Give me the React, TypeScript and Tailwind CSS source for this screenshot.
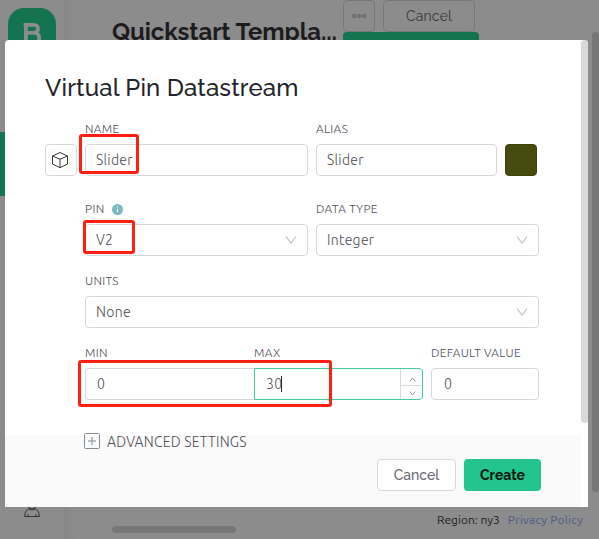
import type { ReactNode } from 'react';

const display = "font-['Raleway','Lato',sans-serif]";

function Chevron() {
  return (
    <svg className="h-[10px] w-[12px] shrink-0" viewBox="0 0 12 10" fill="none" stroke="#bfbfbf" strokeWidth="1.1">
      <path d="M1 1.5 6 8.2 11 1.5" />
    </svg>
  );
}

function Label({ children }: { children: ReactNode }) {
  return <div className="flex h-[14px] items-center whitespace-nowrap text-[12px] font-light leading-[14px] tracking-[0.3px] text-[#4c4d55]">{children}</div>;
}

function Box({ children, className = '', border = 'border-[#d9d9d9]' }: { children?: ReactNode; className?: string; border?: string }) {
  return (
    <div className={`flex h-8 items-center rounded border bg-white pl-[10px] text-[14px] font-light tracking-[0.3px] text-[#4c4d55] ${border} ${className}`}>
      {children}
    </div>
  );
}

function Field({ label, width, children }: { label: ReactNode; width: string; children: ReactNode }) {
  return (
    <div className={`flex shrink-0 flex-col gap-2 ${width}`}>
      <Label>{label}</Label>
      {children}
    </div>
  );
}

function Backdrop() {
  return (
    <div className="flex h-full w-full">
      <aside className="flex w-16 shrink-0 flex-col">
        <div className="mx-2 mt-2 flex h-12 items-center justify-center rounded-2xl bg-[#147351]">
          <svg className="mt-1 ml-px h-6 w-[19px]" viewBox="0 0 19 24" fill="none" stroke="#8c8c8c" strokeWidth="3.8">
            <path d="M.6 2.8h10.2c5.6 0 5.6 8 0 8H4h7.4c6.4 0 6.4 10.4 0 10.4H2.9V2.8" />
          </svg>
        </div>
        <div className="mt-[76px] h-16 w-[5px] bg-[#147351]" />
        <div className="flex-1" />
        <svg className="mb-[21px] ml-6 h-[18px] w-4" viewBox="0 0 16 18" fill="none" stroke="#343434" strokeWidth="1">
          <circle cx="8" cy="5" r="4" />
          <path d="M.6 16.5C.6 12 3 9.5 5 8.8c2 1.6 4 1.6 6 0 2 .7 4.4 3.2 4.4 7.7ZM4 14v2M12 14v2" />
        </svg>
      </aside>
      <div className="-mr-3 w-3 shrink-0 bg-linear-to-r from-[#878787] to-[#8c8c8c]" />
      <main className="flex min-w-0 flex-1 flex-col pl-12">
        <div className="flex h-16">
          <h1 className={`mt-[16px] w-[231px] shrink-0 whitespace-nowrap text-[24px] font-bold leading-8 tracking-[-0.07px] text-[#1c1c1e] ${display}`}>
            Quickstart Templa...
          </h1>
          <div className="flex w-[136px] flex-col">
            <div className="flex gap-2">
              <div className="flex h-8 w-8 shrink-0 items-center justify-center gap-px rounded border border-[#777777]">
                {[0, 1, 2].map((i) => (
                  <span key={i} className="h-[4px] w-[4px] rounded-full border border-[#5c5c60]" />
                ))}
              </div>
              <div className={`flex h-8 w-[92px] items-center justify-center rounded border border-[#777777] text-[14px] tracking-[0.15px] text-[#36373c] ${display}`}>
                Cancel
              </div>
            </div>
            <div className="h-8 rounded bg-[#147351]" />
          </div>
        </div>
        <div className="flex-1" />
        <div className="flex h-[32px] items-start">
          <div className="mt-[19px] h-[7px] w-[124px] rounded-full bg-[#777777]" />
          <div className="ml-[201px] mt-[5px] flex gap-2 whitespace-nowrap text-[12px] leading-4">
            <span className="text-[#1c1c1e]">Region: ny3</span>
            <span className="tracking-[0.2px] text-[#50598a]">Privacy Policy</span>
          </div>
        </div>
      </main>
      <div className="mt-8 h-[460px] w-[7px] shrink-0 rounded-full bg-[#777777]" />
    </div>
  );
}

function Dialog() {
  return (
    <div className="absolute left-[5px] top-10 flex h-[467px] w-[583px] rounded-t bg-white">
      <div className="flex w-[576px] flex-col">
        <div className="flex h-[395px] flex-col pl-10">
          <h2 className={`mt-8 h-8 whitespace-nowrap text-[24px] font-medium leading-8 tracking-[0.17px] text-[#24252b] ${display}`}>
            Virtual Pin Datastream
          </h2>
          <div className="mt-[18px] flex items-end gap-2">
            <div className="flex h-8 w-8 shrink-0 items-center justify-center rounded border border-[#d9d9d9] pr-[2px]">
              <svg className="h-[18px] w-[18px]" viewBox="0 0 18 18" fill="none" stroke="#35363b" strokeWidth="1" strokeLinejoin="round">
                <path d="M9 1.5 16.5 5v8L9 16.7 1.5 13V5ZM1.5 5 9 8.2 16.5 5M9 8.2v8.5" />
              </svg>
            </div>
            <Field label="NAME" width="w-[223px]"><Box>Slider</Box></Field>
            <Field label="ALIAS" width="w-[181px]"><Box>Slider</Box></Field>
            <div className="h-8 w-8 rounded border border-[#3d410b] bg-[#454a0d]" />
          </div>
          <div className="ml-10 mt-[26px] flex gap-2">
            <Field
              width="w-[223px]"
              label={
                <>
                  PIN
                  <svg className="ml-2 h-[11px] w-[11px]" viewBox="0 0 11 11">
                    <circle cx="5.5" cy="5.5" r="5.5" fill="#77bcc0" />
                    <path d="M5.5 4.7v3.6M5.5 2.5v1.1" stroke="#fff" strokeWidth="1.1" />
                  </svg>
                </>
              }
            >
              <Box className="justify-between pr-[10px]">V2<Chevron /></Box>
            </Field>
            <Field label="DATA TYPE" width="w-[223px]">
              <Box className="justify-between pr-[10px]">Integer<Chevron /></Box>
            </Field>
          </div>
          <div className="ml-10 mt-[18px] flex">
            <Field label="UNITS" width="w-[454px]">
              <Box className="justify-between pr-[10px]">None<Chevron /></Box>
            </Field>
          </div>
          <div className="ml-10 mt-[18px] flex">
            <Field label="MIN" width="w-[169px]"><Box className="rounded-r-none border-r-0 pl-[11px]">0</Box></Field>
            <Field label="MAX" width="w-[169px]">
              <Box className="justify-between rounded-l-none pl-[11px]" border="border-[#46c99b]">
                <span className="flex items-center">30<span className="-ml-px h-4 w-px bg-[#222]" /></span>
                <span className="flex h-full w-[22px] flex-col border-l border-[#d9d9d9]">
                  <span className="flex flex-1 items-center justify-center border-b border-[#d9d9d9] pt-1 pl-px">
                    <svg className="h-[5px] w-[7px]" viewBox="0 0 7 5" fill="none" stroke="#999"><path d="M.7 4.5 3.5 1l2.8 3.5" /></svg>
                  </span>
                  <span className="flex flex-1 items-center justify-center pt-px pl-px">
                    <svg className="h-[5px] w-[7px]" viewBox="0 0 7 5" fill="none" stroke="#999"><path d="M.7.5 3.5 4 6.3.5" /></svg>
                  </span>
                </span>
              </Box>
            </Field>
            <div className="ml-2"><Field label="DEFAULT VALUE" width="w-[108px]"><Box className="pl-[12px]">0</Box></Field></div>
          </div>
          <div className="relative z-10 ml-[39px] mt-[33px] flex h-4 shrink-0 items-center gap-[7px] whitespace-nowrap text-[14px] font-light leading-4 tracking-[0.27px] text-[#4c4d55]">
            <svg className="h-4 w-4" viewBox="0 0 16 16" fill="none">
              <rect x=".5" y=".5" width="15" height="15" rx="1" stroke="#898a8d" />
              <path d="M8 4v8M4 8h8" stroke="#7f8c98" />
            </svg>
            <span className="mt-px">ADVANCED SETTINGS</span>
          </div>
        </div>
        <div className={`flex h-[72px] items-center justify-end gap-2 bg-[#fafafa] pr-[40px] text-[14px] ${display}`}>
          <div className="mt-2 flex h-8 w-[79px] items-center justify-center rounded border border-[#d9d9d9] bg-white font-medium text-[#68696f]">Cancel</div>
          <div className="mt-2 flex h-8 w-[77px] items-center justify-center rounded bg-[#24c48e] font-bold text-[#07150f]">Create</div>
        </div>
      </div>
      <div className="h-[383px] w-[7px] rounded-full bg-[#d9d9d9]" />
    </div>
  );
}

/** Highlight frames drawn over the values to enter. */
function Highlights() {
  return (
    <>
      <div className="absolute left-[79px] top-[134px] h-10 w-[60px] rounded-[3px] border-3 border-[#ff1e12]" />
      <div className="absolute left-[83px] top-[220px] h-[34px] w-[52px] rounded-[3px] border-3 border-[#ff1e12]" />
      <div className="absolute left-[78px] top-[360px] h-[47px] w-[254px] rounded-[3px] border-3 border-[#ff1e12]" />
    </>
  );
}

export default function App() {
  return (
    <div className="relative h-[539px] w-[599px] overflow-hidden bg-[#8c8c8c] font-['Ubuntu','Noto_Sans',sans-serif]">
      <Backdrop />
      <Dialog />
      <Highlights />
    </div>
  );
}
